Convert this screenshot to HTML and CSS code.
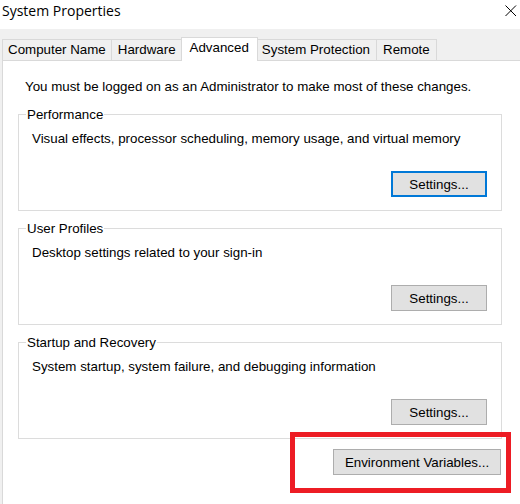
FILE: index.html
```html
<!DOCTYPE html>
<html lang="en">
<head>
<meta charset="utf-8">
<title>System Properties</title>
<link rel="stylesheet" href="styles.css">
</head>
<body>
<div class="window">
  <div class="titlebar">
    <span class="title">System Properties</span>
    <svg class="close" width="12" height="12" viewBox="0 0 12 12" aria-label="Close">
      <path d="M0.5 0.5 L11 11 M11 0.5 L0.5 11" stroke="#000" stroke-width="1" fill="none"/>
    </svg>
  </div>
  <div class="client">
    <div class="tabs">
      <div class="tab">Computer Name</div>
      <div class="tab">Hardware</div>
      <div class="tab tab-active">Advanced</div>
      <div class="tab">System Protection</div>
      <div class="tab">Remote</div>
    </div>
    <div class="panel">
      <p class="note">You must be logged on as an Administrator to make most of these changes.</p>
      <fieldset class="group">
        <legend>Performance</legend>
        <p class="desc">Visual effects, processor scheduling, memory usage, and virtual memory</p>
        <div class="actions"><button class="btn btn-focus">Settings...</button></div>
      </fieldset>
      <fieldset class="group">
        <legend>User Profiles</legend>
        <p class="desc">Desktop settings related to your sign-in</p>
        <div class="actions"><button class="btn">Settings...</button></div>
      </fieldset>
      <fieldset class="group">
        <legend>Startup and Recovery</legend>
        <p class="desc">System startup, system failure, and debugging information</p>
        <div class="actions"><button class="btn">Settings...</button></div>
      </fieldset>
      <div class="footer"><button class="btn btn-wide">Environment Variables...</button></div>
    </div>
  </div>
  <div class="highlight"></div>
</div>
</body>
</html>
```
FILE: styles.css
```css
html, body {
  margin: 0;
  padding: 0;
}
body {
  width: 520px;
  height: 504px;
  overflow: hidden;
  background: #f0f0f0;
  font-family: "Liberation Sans", Arial, sans-serif;
  font-size: 13.3333px;
  line-height: 15px;
  color: #000;
}
.window {
  position: relative;
  width: 520px;
  height: 504px;
  display: flex;
  flex-direction: column;
}
.titlebar {
  height: 29px;
  background: #fff;
  display: flex;
  justify-content: space-between;
  align-items: flex-start;
  padding: 0 3px 0 2px;
  box-sizing: border-box;
  flex: none;
}
.title {
  font-family: "Open Sans", "Noto Sans", sans-serif;
  font-size: 14px;
  line-height: 20px;
  margin-top: 1px;
  color: #000;
}
.close {
  margin-top: 5px;
  display: block;
}
.client {
  flex: 1;
  display: flex;
  flex-direction: column;
  min-height: 0;
}
.tabs {
  display: flex;
  align-items: flex-end;
  padding-left: 2px;
  margin-top: 8px;
  margin-bottom: -1px;
  height: 24px;
  position: relative;
  z-index: 1;
  flex: none;
}
.tab {
  height: 21px;
  box-sizing: border-box;
  padding: 2px 6px 3px;
  margin-bottom: 1px;
  border: 1px solid #d9d9d9;
  border-bottom: none;
  background: #f0f0f0;
  white-space: nowrap;
}
.tab + .tab {
  margin-left: -1px;
}
.tab:first-child {
  padding: 2px 5px 3px;
}
.tab-active {
  height: 24px;
  margin-bottom: 0;
  margin-left: -2px;
  margin-right: -2px;
  padding: 2px 8px 6px;
  background: #fff;
  position: relative;
  z-index: 2;
}
.tab + .tab-active {
  margin-left: -2px;
}
.panel {
  flex: 1;
  margin-left: 2px;
  width: 540px;
  background: #fff;
  border-left: 1px solid #d9d9d9;
  border-top: 1px solid #d9d9d9;
  padding: 18px 0 0 15px;
  box-sizing: border-box;
}
.note {
  margin: 0 0 13px 7px;
}
.group {
  margin: 0 0 10px 0;
  width: 484px;
  box-sizing: border-box;
  border: 1px solid #dcdcdc;
  padding: 9px 14px 13px 13px;
  min-inline-size: 0;
}
.group legend {
  padding: 0 1px;
  margin-left: -6px;
  line-height: 15px;
}
.desc {
  margin: 0;
}
.actions {
  display: flex;
  justify-content: flex-end;
  margin-top: 25px;
}
.btn {
  width: 96px;
  height: 26px;
  box-sizing: border-box;
  background: #e1e1e1;
  border: 1px solid #adadad;
  font-family: "Liberation Sans", Arial, sans-serif;
  font-size: 13.3333px;
  line-height: 15px;
  color: #000;
  padding: 0;
  margin: 0;
}
.btn-focus {
  border: 2px solid #0078d7;
}
.btn-wide {
  width: 168px;
}
.footer {
  width: 484px;
  display: flex;
  justify-content: flex-end;
  padding-right: 1px;
  box-sizing: border-box;
  margin-top: 6px;
}
.highlight {
  position: absolute;
  left: 290px;
  top: 432px;
  width: 221px;
  height: 61px;
  box-sizing: border-box;
  border: 5px solid #ed1c24;
}
```
